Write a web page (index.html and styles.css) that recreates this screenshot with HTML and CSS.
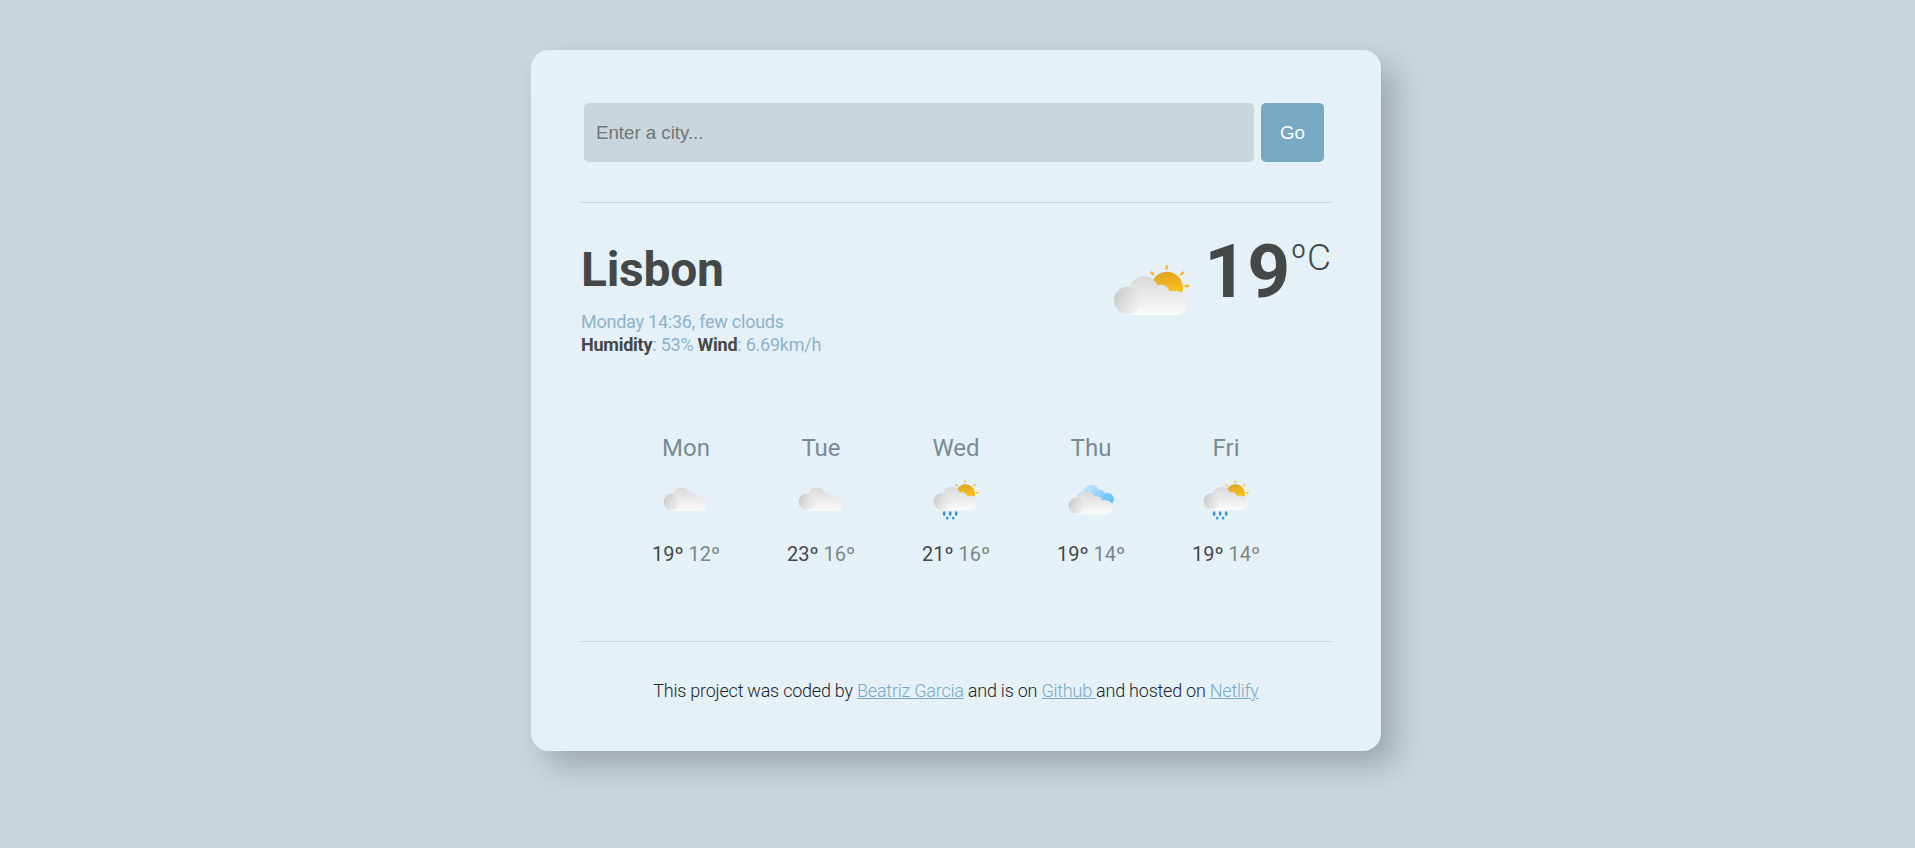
FILE: index.html
```html
<!DOCTYPE html>
<html lang="en">
<head>
<meta charset="utf-8">
<title>Weather</title>
<link rel="stylesheet" href="styles.css">
</head>
<body>
<svg class="defs" width="0" height="0" aria-hidden="true">
  <defs>
    <linearGradient id="cloudFill" gradientUnits="userSpaceOnUse" x1="180" y1="170" x2="180" y2="287"><stop offset="0" stop-color="#d9d9da"/><stop offset="1" stop-color="#fbfbfb"/></linearGradient>
    <linearGradient id="puffFill" x1="0" y1="0.25" x2="1" y2="0.7"><stop offset="0" stop-color="#c8c8c9"/><stop offset="1" stop-color="#f0f0f0" stop-opacity="0.7"/></linearGradient>
    <linearGradient id="sunFill" x1="0" y1="0" x2="0.2" y2="1"><stop offset="0" stop-color="#dfa022"/><stop offset="1" stop-color="#f7c11f"/></linearGradient>
    <linearGradient id="skyFill" gradientUnits="userSpaceOnUse" x1="160" y1="160" x2="250" y2="265"><stop offset="0" stop-color="#c2e8fd"/><stop offset="1" stop-color="#6cbff5"/></linearGradient>
    <g id="cloud">
      <path fill="url(#cloudFill)" d="M113 287A43 43 0 0 1 119 202A45 45 0 0 1 203 198A25 25 0 0 1 238 215H258A36 36 0 0 1 258 287Z"/>
      <circle cx="113" cy="243" r="41" fill="url(#puffFill)"/>
    </g>
    <g id="sun">
      <path fill="url(#sunFill)" d="M183 203A48 48 0 1 1 277 219H215Z"/>
      <path stroke="#f5bb35" stroke-width="8" stroke-linecap="round" d="M230 141V147M184 160L189 165M279 160L274 165M287 200H294"/>
    </g>
    <g id="rain" fill="#3a97d3">
      <ellipse cx="125" cy="304" rx="7" ry="12"/><ellipse cx="155" cy="304" rx="7" ry="12"/><ellipse cx="185" cy="304" rx="7" ry="12"/>
      <ellipse cx="140" cy="326" rx="6.500" ry="8"/><ellipse cx="170" cy="326" rx="6.500" ry="8"/>
    </g>
  </defs>
</svg>
<main class="card">
  <form class="search">
    <input class="search-input" type="text" placeholder="Enter a city...">
    <button class="search-button" type="button">Go</button>
  </form>
  <section class="current">
    <div>
      <h1 class="city">Lisbon</h1>
      <p class="details"><span>Monday 14:36, few clouds</span><br><strong>Humidity</strong>: 53% <strong>Wind</strong>: 6.69km/h</p>
    </div>
    <div class="reading">
      <svg class="icon-large" viewBox="72 137 228 153"><use href="#sun"/><use href="#cloud"/></svg>
      <span class="temperature">19</span><span class="unit">ºC</span>
    </div>
  </section>
  <section class="forecast">
    <div class="day"><div class="name">Mon</div><svg class="icon" viewBox="69 128 230 215"><use href="#cloud"/></svg><div class="range">19º <span class="low">12º</span></div></div>
    <div class="day"><div class="name">Tue</div><svg class="icon" viewBox="69 128 230 215"><use href="#cloud"/></svg><div class="range">23º <span class="low">16º</span></div></div>
    <div class="day"><div class="name">Wed</div><svg class="icon" viewBox="69 131 230 215"><use href="#sun"/><use href="#cloud"/><use href="#rain"/></svg><div class="range">21º <span class="low">16º</span></div></div>
    <div class="day"><div class="name">Thu</div><svg class="icon" viewBox="69 131 230 215"><path fill="url(#skyFill)" d="M112 240Q105 200 147 187Q158 160 187 160Q211 160 222 184Q242 181 251 200Q297 194 298 235Q298 245 292 252L200 245Z"/><use href="#cloud" y="22"/></svg><div class="range">19º <span class="low">14º</span></div></div>
    <div class="day"><div class="name">Fri</div><svg class="icon" viewBox="69 131 230 215"><use href="#sun"/><use href="#cloud"/><use href="#rain"/></svg><div class="range">19º <span class="low">14º</span></div></div>
  </section>
  <footer class="footer">This project was coded by <a href="#">Beatriz Garcia</a> and is on <a href="#">Github </a>and hosted on <a href="#">Netlify</a></footer>
</main>
</body>
</html>
```
FILE: styles.css
```css
* { box-sizing: border-box; }
html { background: #c9d6dc; }
body { margin: 0; min-height: 100vh; padding: 50px 0 0 531px; font-family: Roboto, "Liberation Sans", sans-serif; color: #444849; }
.defs { display: block; }
.card { width: 850px; height: 701px; padding: 53px 50px 0; border-radius: 18px; background: #e5f1f6; box-shadow: 15px 15px 30px rgba(0, 0, 0, 0.21); }
.search { display: flex; gap: 7px; height: 100px; padding: 0 7px 0 3px; border-bottom: 1px solid #c9d6dc; align-items: flex-start; }
.search-input, .search-button { height: 59px; border: 0; border-radius: 5px; font: 18.67px "Liberation Sans", Arial, sans-serif; }
.search-input { flex: 1; padding: 1px 12px 0; background: #c9d6dc; }
.search-input::placeholder { color: #757575; }
.search-button { width: 63px; padding: 1px 0 0; background: #77a9c2; color: #fff; }
.current { display: flex; justify-content: space-between; height: 220px; padding-top: 39px; }
.city { margin: 0; font-size: 48px; line-height: 56px; font-weight: 700; letter-spacing: -0.3px; }
.details { margin: 12px 0 0; font-size: 18px; line-height: 23px; letter-spacing: -0.24px; color: #8eb3c8; }
.details strong { color: #444849; }
.reading { display: flex; align-items: flex-start; }
.icon-large { width: 76px; height: 51px; margin: 23px 14px 0 0; }
.temperature { font-size: 75px; line-height: 88px; font-weight: 700; margin-top: -15px; }
.unit { font-size: 37px; line-height: 44px; font-weight: 300; margin-top: -6px; }
.forecast { display: flex; width: 675px; height: 218px; margin: 0 auto; padding-top: 10px; }
.day { width: 135px; text-align: center; }
.name { font-size: 24px; line-height: 30px; color: #788b93; }
.icon { display: block; width: 46px; height: 43px; margin: 16px auto 0; }
.range { margin-top: 20px; font-size: 20px; line-height: 24px; }
.low { color: #7c8688; }
.footer { border-top: 1px solid #c9d6dc; padding-top: 37px; text-align: center; font-size: 18px; line-height: 23px; font-weight: 300; letter-spacing: -0.23px; color: #212529; }
.footer a { color: #77a9c2; }
```
